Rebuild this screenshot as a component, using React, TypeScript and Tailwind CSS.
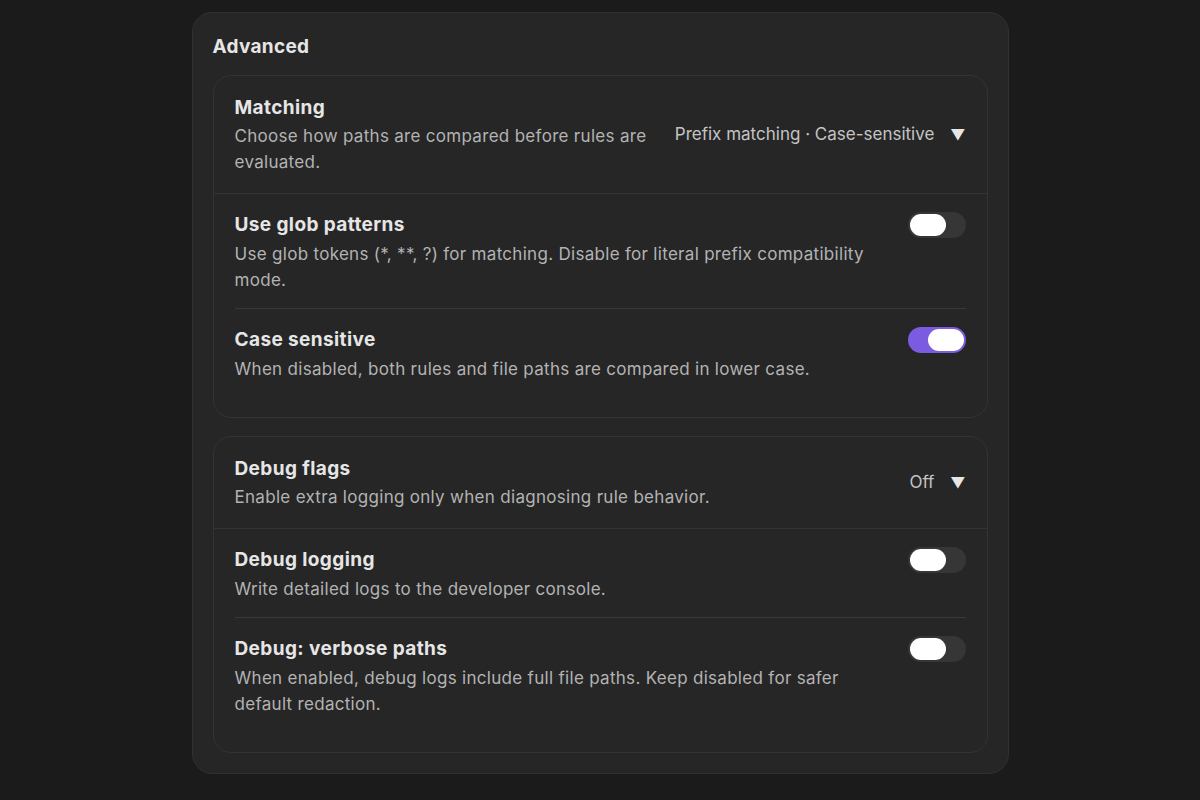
import { useState } from "react";

type ToggleRow = {
  title: string;
  desc: string;
  on: boolean;
};

type Group = {
  title: string;
  desc: string;
  value: string;
  rows: ToggleRow[];
};

const groups: Group[] = [
  {
    title: "Matching",
    desc: "Choose how paths are compared before rules are evaluated.",
    value: "Prefix matching · Case-sensitive",
    rows: [
      {
        title: "Use glob patterns",
        desc: "Use glob tokens (*, **, ?) for matching. Disable for literal prefix compatibility mode.",
        on: false,
      },
      {
        title: "Case sensitive",
        desc: "When disabled, both rules and file paths are compared in lower case.",
        on: true,
      },
    ],
  },
  {
    title: "Debug flags",
    desc: "Enable extra logging only when diagnosing rule behavior.",
    value: "Off",
    rows: [
      {
        title: "Debug logging",
        desc: "Write detailed logs to the developer console.",
        on: false,
      },
      {
        title: "Debug: verbose paths",
        desc: "When enabled, debug logs include full file paths. Keep disabled for safer default redaction.",
        on: false,
      },
    ],
  },
];

function Toggle({ initial }: { initial: boolean }) {
  const [on, setOn] = useState(initial);
  return (
    <button
      onClick={() => setOn(!on)}
      className={`flex h-[26px] w-[58px] shrink-0 items-center rounded-full p-[2px] ${
        on ? "justify-end bg-[#7b5ce0]" : "justify-start bg-[#363636]"
      }`}
    >
      <span className="h-[22px] w-[36px] rounded-full bg-white" />
    </button>
  );
}

function SettingsGroup({ group }: { group: Group }) {
  return (
    <div className="rounded-[18px] border border-[#333333] bg-[#262626]">
      {/* Select row */}
      <div className="flex items-center gap-5 border-b border-[#333333] px-[21px] pt-[19px] pb-[18px]">
        <div className="flex-1">
          <div className="text-[19px] font-bold leading-[26px] tracking-[0.4px] text-[#e6e6e6]">
            {group.title}
          </div>
          <div className="mt-[2px] text-[17px] leading-[26px] tracking-[0.3px] text-[#b3b3b3]">
            {group.desc}
          </div>
        </div>
        <button className="flex shrink-0 items-center gap-4 text-[17px] text-[#c4c4c4]">
          <span>{group.value}</span>
          <span className="text-[15px] text-[#e6e6e6]">▼</span>
        </button>
      </div>

      {/* Toggle rows */}
      <div className="px-[21px] pb-[20px]">
        {group.rows.map((row, i) => (
          <div
            key={row.title}
            className={`flex items-start gap-6 pt-[18px] pb-[15px] ${
              i > 0 ? "border-t border-[#383838]" : ""
            }`}
          >
            <div className="flex-1">
              <div className="text-[19px] font-bold leading-[26px] tracking-[0.4px] text-[#e6e6e6]">
                {row.title}
              </div>
              <div className="mt-[3px] max-w-[640px] text-[17px] leading-[26px] tracking-[0.3px] text-[#b3b3b3]">
                {row.desc}
              </div>
            </div>
            <Toggle initial={row.on} />
          </div>
        ))}
      </div>
    </div>
  );
}

export default function App() {
  return (
    <div
      className="min-h-[800px] bg-[#1b1b1b] pt-[12px]"
      style={{ fontFamily: "Inter, 'Noto Sans', sans-serif" }}
    >
      <div className="mx-auto w-[817px] rounded-[20px] border border-[#303030] bg-[#262626] px-[20px] pt-[20px] pb-[20px]">
        <h2 className="mb-[14px] text-[19px] font-bold leading-[28px] tracking-[0.3px] text-[#e6e6e6]">
          Advanced
        </h2>
        <div className="flex flex-col gap-[18px]">
          {groups.map((g) => (
            <SettingsGroup key={g.title} group={g} />
          ))}
        </div>
      </div>
    </div>
  );
}
